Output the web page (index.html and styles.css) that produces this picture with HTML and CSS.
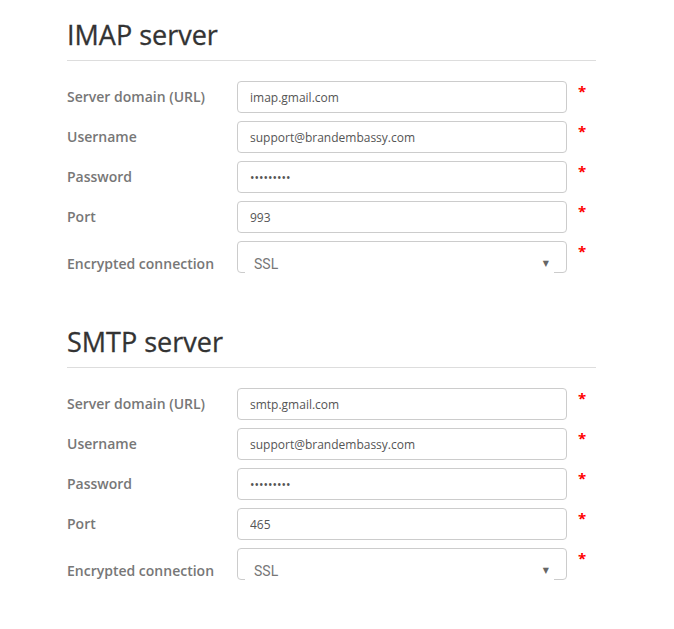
FILE: index.html
```html
<!DOCTYPE html>
<html lang="en">
<head>
  <meta charset="UTF-8" />
  <title>Mail servers</title>
  <link rel="stylesheet" href="styles.css">
</head>
<body>

  <div class="settings">

    <!-- IMAP -->
    <section class="server">
      <h2 class="server-title">IMAP server</h2>
      <div class="row">
        <label class="row-label">Server domain (URL)</label>
        <div class="field"><input class="input" type="text" value="imap.gmail.com"></div>
        <span class="req">*</span>
      </div>
      <div class="row">
        <label class="row-label">Username</label>
        <div class="field"><input class="input" type="text" value="support@brandembassy.com"></div>
        <span class="req">*</span>
      </div>
      <div class="row">
        <label class="row-label">Password</label>
        <div class="field"><input class="input" type="password" value="123456789"></div>
        <span class="req">*</span>
      </div>
      <div class="row">
        <label class="row-label">Port</label>
        <div class="field"><input class="input" type="text" value="993"></div>
        <span class="req">*</span>
      </div>
      <div class="row row-select">
        <label class="row-label">Encrypted connection</label>
        <div class="field">
          <div class="select">
            <span class="select-value">SSL</span>
            <span class="select-arrow">&#9660;</span>
          </div>
        </div>
        <span class="req">*</span>
      </div>
    </section>

    <!-- SMTP -->
    <section class="server">
      <h2 class="server-title">SMTP server</h2>
      <div class="row">
        <label class="row-label">Server domain (URL)</label>
        <div class="field"><input class="input" type="text" value="smtp.gmail.com"></div>
        <span class="req">*</span>
      </div>
      <div class="row">
        <label class="row-label">Username</label>
        <div class="field"><input class="input" type="text" value="support@brandembassy.com"></div>
        <span class="req">*</span>
      </div>
      <div class="row">
        <label class="row-label">Password</label>
        <div class="field"><input class="input" type="password" value="123456789"></div>
        <span class="req">*</span>
      </div>
      <div class="row">
        <label class="row-label">Port</label>
        <div class="field"><input class="input" type="text" value="465"></div>
        <span class="req">*</span>
      </div>
      <div class="row row-select">
        <label class="row-label">Encrypted connection</label>
        <div class="field">
          <div class="select">
            <span class="select-value">SSL</span>
            <span class="select-arrow">&#9660;</span>
          </div>
        </div>
        <span class="req">*</span>
      </div>
    </section>

  </div>

</body>
</html>
```

FILE: styles.css
```css
body {
  margin: 0;
  background: #fff;
  font-family: 'Open Sans', sans-serif;
  color: #444;
}

.settings {
  width: 529px;
  margin-left: 67px;
  padding-top: 16px;
}

.server {
  margin-bottom: 50px;
}

.server-title {
  margin: 0;
  font-size: 27px;
  font-weight: 400;
  line-height: 38px;
  color: #333;
  padding-bottom: 6px;
  border-bottom: 1px solid #ddd;
  margin-bottom: 20px;
  -webkit-text-stroke: 0.3px #333;
}

.row {
  display: grid;
  grid-template-columns: 170px 330px 29px;
  height: 32px;
  margin-bottom: 8px;
}

.row-label {
  font-size: 14px;
  font-weight: 600;
  color: #777;
  line-height: 32px;
}

.row-select .row-label {
  padding-top: 7px;
}

.field {
  position: relative;
}

.input {
  box-sizing: border-box;
  width: 330px;
  height: 32px;
  border: 1px solid #ccc;
  border-radius: 4px;
  padding: 0 12px;
  font-family: 'Open Sans', sans-serif;
  font-size: 12px;
  color: #555;
  outline: none;
}

.select {
  box-sizing: border-box;
  position: relative;
  height: 32px;
  border: 1px solid #ccc;
  border-radius: 4px;
  display: flex;
  align-items: flex-end;
  justify-content: space-between;
  padding: 0 17px 0 16px;
}

.select::after {
  content: "";
  position: absolute;
  left: 7px;
  right: 12px;
  bottom: -1px;
  height: 1px;
  background: #fff;
}

.select-value {
  font-family: 'Roboto', 'Liberation Sans', sans-serif;
  font-size: 14px;
  line-height: 16px;
  color: #777;
}

.select-arrow {
  font-family: 'DejaVu Sans', sans-serif;
  font-size: 8px;
  line-height: 10px;
  color: #666;
  padding-bottom: 3px;
}

.req {
  color: #f00;
  font-size: 15px;
  font-weight: 700;
  line-height: 20px;
  padding-left: 11px;
}
```
